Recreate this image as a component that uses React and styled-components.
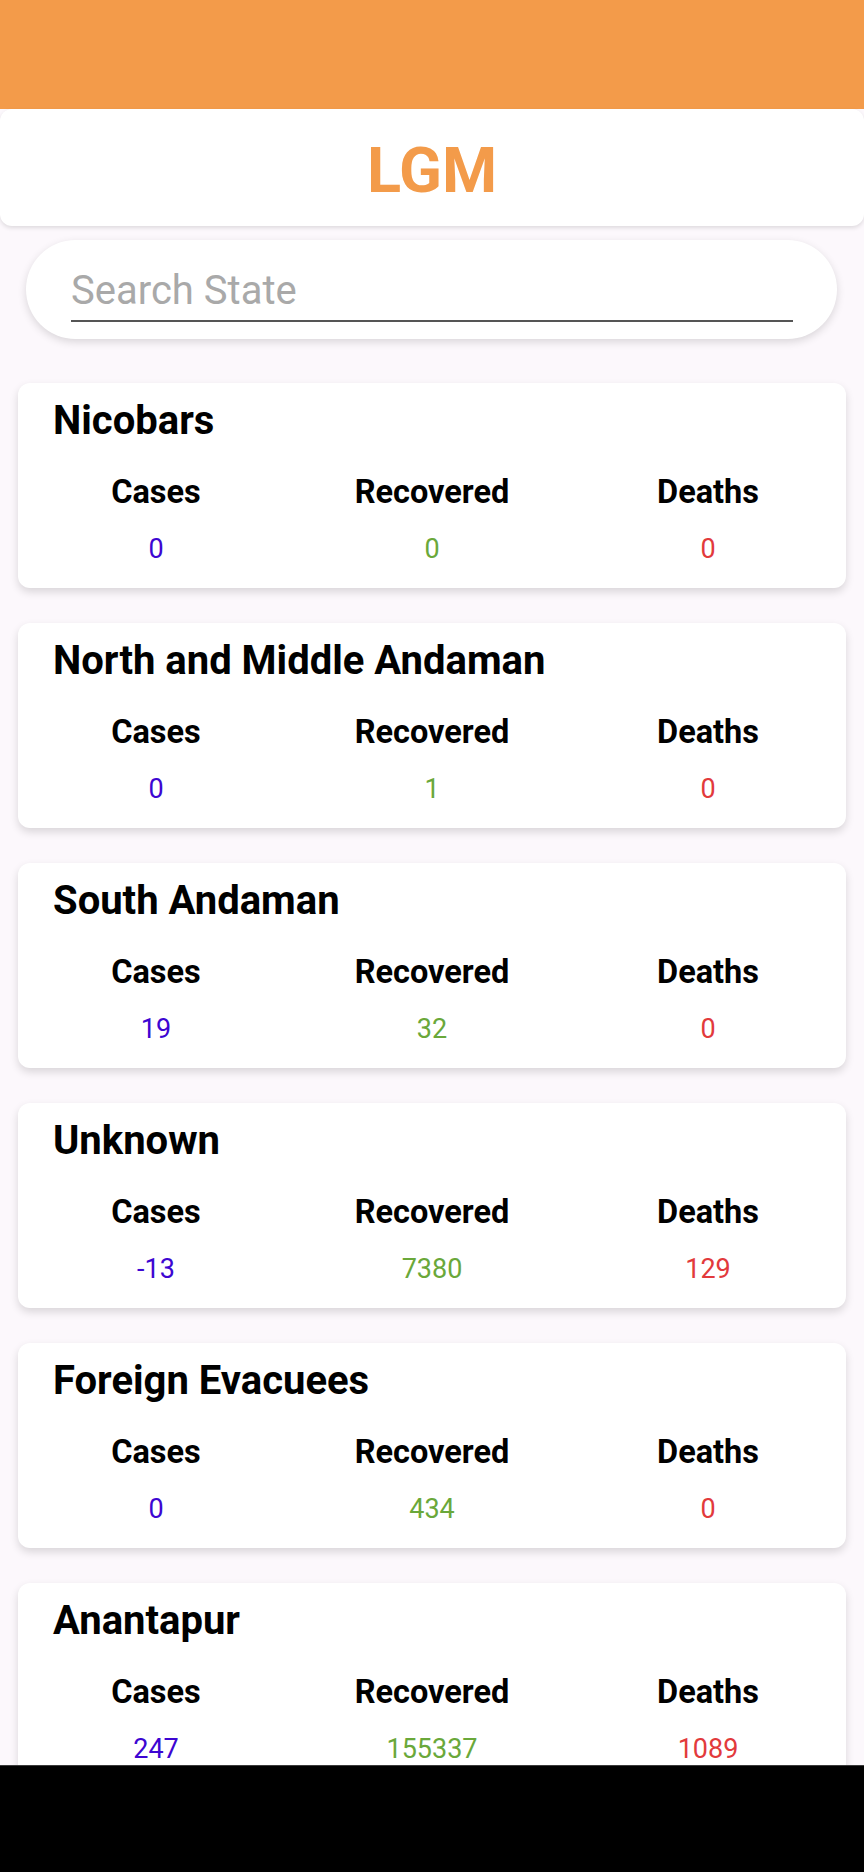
import React from "react";
import styled, { createGlobalStyle } from "styled-components";

const districts = [
  { name: "Nicobars", cases: 0, recovered: 0, deaths: 0 },
  { name: "North and Middle Andaman", cases: 0, recovered: 1, deaths: 0 },
  { name: "South Andaman", cases: 19, recovered: 32, deaths: 0 },
  { name: "Unknown", cases: -13, recovered: 7380, deaths: 129 },
  { name: "Foreign Evacuees", cases: 0, recovered: 434, deaths: 0 },
  { name: "Anantapur", cases: 247, recovered: 155337, deaths: 1089 },
];

export default function App() {
  return (
    <>
      <GlobalStyle />
      <StatusBar />
      <AppBar>
        <Logo>LGM</Logo>
      </AppBar>
      <SearchPill>
        <SearchInput placeholder="Search State" />
      </SearchPill>
      <List>
        {districts.map((d) => (
          <Card key={d.name}>
            <Title>{d.name}</Title>
            <Stats>
              <Stat>
                <Label>Cases</Label>
                <Value tone="cases">{d.cases}</Value>
              </Stat>
              <Stat>
                <Label>Recovered</Label>
                <Value tone="recovered">{d.recovered}</Value>
              </Stat>
              <Stat>
                <Label>Deaths</Label>
                <Value tone="deaths">{d.deaths}</Value>
              </Stat>
            </Stats>
          </Card>
        ))}
      </List>
      <NavBar />
    </>
  );
}

const tones = {
  cases: "#3d06d2",
  recovered: "#6aa83a",
  deaths: "#e23a3c",
};

const GlobalStyle = createGlobalStyle`
  body {
    margin: 0;
    background: #fcf8fc;
    font-family: Roboto, "Noto Sans", sans-serif;
  }
`;

const StatusBar = styled.div`
  height: 109px;
  background: #f39b4a;
`;

const AppBar = styled.header`
  height: 117px;
  box-sizing: border-box;
  padding-top: 6px;
  background: #fff;
  border-radius: 12px;
  box-shadow: 0 2px 4px rgba(0, 0, 0, 0.12);
  display: flex;
  align-items: center;
  justify-content: center;
`;

const Logo = styled.h1`
  margin: 0;
  font-size: 63px;
  line-height: 70px;
  font-weight: 700;
  color: #f39b4a;
`;

const SearchPill = styled.div`
  margin: 14px 27px 0 26px;
  height: 99px;
  box-sizing: border-box;
  padding: 27px 44px 0 45px;
  background: #fff;
  border-radius: 50px;
  box-shadow: 0 3px 8px rgba(0, 0, 0, 0.14);
`;

const SearchInput = styled.input`
  display: block;
  width: 100%;
  box-sizing: border-box;
  height: 55px;
  padding: 0 0 7px;
  border: none;
  border-bottom: 2px solid #555;
  outline: none;
  background: transparent;
  font-family: Roboto, sans-serif;
  font-size: 40px;
  line-height: 46px;
  color: #222;

  &::placeholder {
    color: #a9a9a9;
  }
`;

const List = styled.main`
  margin: 44px 18px 0;
  display: flex;
  flex-direction: column;
  gap: 35px;
`;

const Card = styled.section`
  height: 205px;
  box-sizing: border-box;
  padding: 15px 0 23px;
  background: #fff;
  border-radius: 12px;
  box-shadow: 0 4px 8px rgba(0, 0, 0, 0.14);
`;

const Title = styled.h2`
  margin: 0 0 29px 35px;
  font-size: 40px;
  line-height: 46px;
  font-weight: 700;
  color: #000;
`;

const Stats = styled.div`
  display: grid;
  grid-template-columns: repeat(3, 1fr);
`;

const Stat = styled.div`
  display: flex;
  flex-direction: column;
  align-items: center;
  gap: 22px;
`;

const Label = styled.span`
  font-size: 32.5px;
  line-height: 38px;
  font-weight: 700;
  color: #000;
`;

const Value = styled.span`
  font-size: 27px;
  line-height: 32px;
  color: ${(p) => tones[p.tone]};
`;

const NavBar = styled.div`
  position: fixed;
  left: 0;
  right: 0;
  bottom: 0;
  height: 106px;
  background: #000;
  border-top: 1px solid #3a3a3a;
`;
